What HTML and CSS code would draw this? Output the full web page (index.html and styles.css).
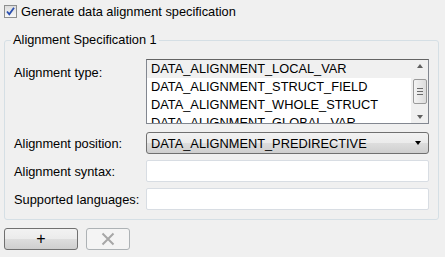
FILE: index.html
```html
<!DOCTYPE html>
<html lang="en">
<head>
  <meta charset="UTF-8" />
  <title>Alignment</title>
  <link rel="stylesheet" href="styles.css">
</head>
<body>
  <div class="panel">
    <label class="check-row">
      <span class="checkbox">
        <svg width="11" height="11" viewBox="0 0 11 11">
          <path d="M2 5.5 L4.3 8.3 L9 1.8" fill="none" stroke="#2a4fb0" stroke-width="1.8"/>
        </svg>
      </span>
      Generate data alignment specification
    </label>

    <fieldset class="group">
      <legend>Alignment Specification 1</legend>

      <div class="form">
        <div class="label label-top">Alignment type:</div>
        <div class="listbox">
          <div class="items">
            <div class="item selected">DATA_ALIGNMENT_LOCAL_VAR</div>
            <div class="item">DATA_ALIGNMENT_STRUCT_FIELD</div>
            <div class="item">DATA_ALIGNMENT_WHOLE_STRUCT</div>
            <div class="item">DATA_ALIGNMENT_GLOBAL_VAR</div>
          </div>
          <div class="scrollbar">
            <span class="arrow up"></span>
            <span class="thumb"><i></i><i></i><i></i></span>
            <span class="arrow down"></span>
          </div>
        </div>

        <div class="label">Alignment position:</div>
        <div class="combo">
          <span>DATA_ALIGNMENT_PREDIRECTIVE</span>
          <span class="caret"></span>
        </div>

        <div class="label">Alignment syntax:</div>
        <div class="field"></div>

        <div class="label">Supported languages:</div>
        <div class="field"></div>
      </div>
    </fieldset>

    <div class="buttons">
      <button class="btn add">+</button>
      <button class="btn remove" disabled>
        <svg width="14" height="14" viewBox="0 0 14 14">
          <path d="M1.5 1.5 L12.5 12.5 M12.5 1.5 L1.5 12.5" stroke="#a7a7a7" stroke-width="2"/>
        </svg>
      </button>
    </div>
  </div>
</body>
</html>
```

FILE: styles.css
```css
* {
  margin: 0;
  padding: 0;
  box-sizing: border-box;
}

body, html {
  width: 100%;
  height: 100%;
  overflow: hidden;
  background-color: #f0f0f0;
  font-family: 'Liberation Sans', Arial, sans-serif;
  font-size: 12.8px;
  color: #000;
}

.panel {
  padding: 5px 6px 0 4px;
  display: flex;
  flex-direction: column;
}

.check-row {
  display: flex;
  align-items: center;
  gap: 4px;
  height: 13px;
  line-height: 13px;
}

.checkbox {
  width: 13px;
  height: 13px;
  border: 1px solid #8e8f8f;
  background: linear-gradient(#dcdcdc, #f8f8f8);
  display: flex;
  align-items: center;
  justify-content: center;
}

.group {
  margin-top: 15px;
  border: 1px solid #d5dfe5;
  border-radius: 3px;
  padding: 12px 9px 9px 9px;
}

.group legend {
  margin-left: -3px;
  padding: 0 2px;
  line-height: 14px;
}

.form {
  display: grid;
  grid-template-columns: 132px 1fr;
  row-gap: 6px;
  align-items: center;
}

.label-top {
  align-self: start;
  padding-top: 6px;
}

.listbox {
  height: 65px;
  margin-bottom: 2px;
  border: 1px solid #828790;
  border-top-color: #646464;
  background: #fff;
  display: flex;
  overflow: hidden;
}

.items {
  flex: 1;
}

.item {
  height: 18px;
  line-height: 18px;
  padding-left: 4px;
  white-space: nowrap;
}

.item.selected {
  background: #f0f0f0;
}

.scrollbar {
  width: 17px;
  background: #f0f0f0;
  display: flex;
  flex-direction: column;
  align-items: center;
  justify-content: space-between;
  padding: 4px 0 4px;
}

.arrow {
  width: 0;
  height: 0;
  border-left: 3.5px solid transparent;
  border-right: 3.5px solid transparent;
}

.arrow.up {
  border-bottom: 4px solid #606060;
}

.arrow.down {
  border-top: 4px solid #606060;
}

.thumb {
  width: 14px;
  height: 25px;
  border: 1px solid #9a9a9a;
  border-radius: 2px;
  background: linear-gradient(90deg, #f4f4f4, #dcdcdc);
  display: flex;
  flex-direction: column;
  align-items: center;
  justify-content: center;
  gap: 2px;
}

.thumb i {
  display: block;
  width: 6px;
  height: 1px;
  background: #6a6a6a;
}

.combo {
  height: 22px;
  border: 1px solid #707070;
  border-radius: 3px;
  background: linear-gradient(#f2f2f2 0%, #ebebeb 50%, #dddddd 51%, #cfcfcf 100%);
  display: flex;
  align-items: center;
  justify-content: space-between;
  padding: 0 7px 0 4px;
}

.caret {
  width: 0;
  height: 0;
  border-left: 3.5px solid transparent;
  border-right: 3.5px solid transparent;
  border-top: 4px solid #000;
}

.field {
  height: 22px;
  border: 1px solid #d8dde3;
  border-radius: 2px;
  background: #fff;
}

.buttons {
  margin-top: 8px;
  display: flex;
  gap: 8px;
}

.btn {
  height: 22px;
  border-radius: 3px;
  font-family: 'Liberation Sans', Arial, sans-serif;
  font-size: 16px;
  display: flex;
  align-items: center;
  justify-content: center;
}

.btn.add {
  width: 74px;
  border: 1px solid #707070;
  background: linear-gradient(#f2f2f2 0%, #ebebeb 50%, #dddddd 51%, #cfcfcf 100%);
  color: #000;
}

.btn.remove {
  width: 44px;
  border: 1px solid #adb2b5;
  background: #f4f4f4;
}
```
